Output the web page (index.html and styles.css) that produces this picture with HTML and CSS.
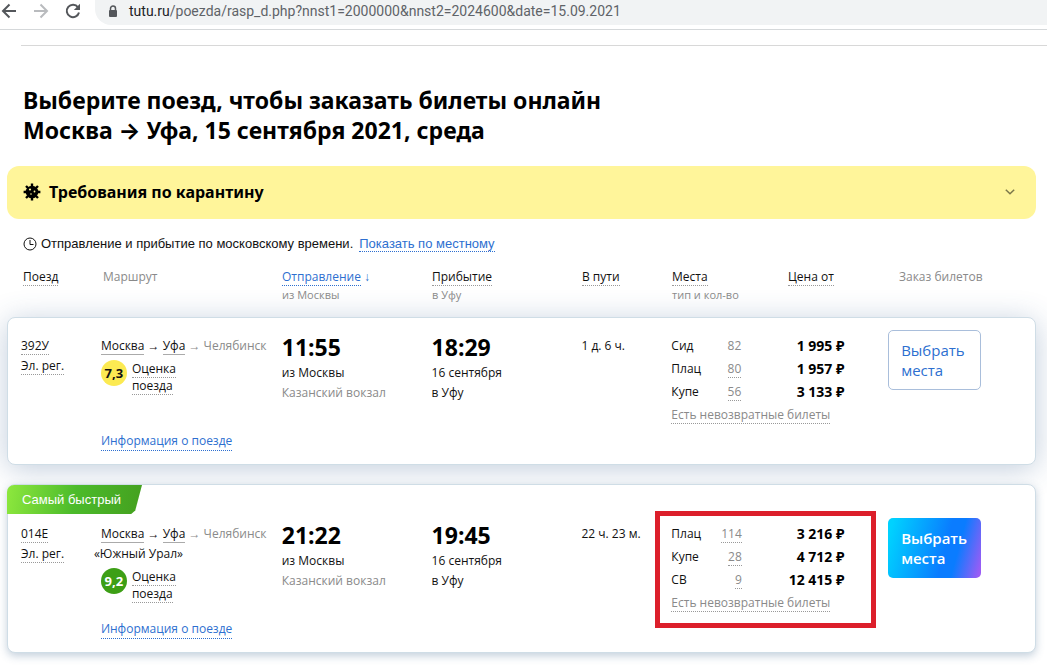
FILE: index.html
```html
<!DOCTYPE html>
<html lang="ru">
<head>
<meta charset="utf-8">
<title>Москва → Уфа</title>
<link rel="stylesheet" href="styles.css">
</head>
<body>
<header class="browser">
  <button class="nav" aria-label="Назад"><svg width="16" height="16" viewBox="0 0 16 16" fill="none" stroke="#54575b" stroke-width="2"><path d="M15 8H2M8.500 1.500 2 8l6.500 6.500"/></svg></button>
  <button class="nav" aria-label="Вперёд"><svg width="16" height="16" viewBox="0 0 16 16" fill="none" stroke="#b9bbbe" stroke-width="2"><path d="M1 8h13M7.500 1.500 14 8l-6.500 6.500"/></svg></button>
  <button class="nav" aria-label="Обновить"><svg width="16" height="16" viewBox="0 0 16 16" fill="none" stroke="#54575b" stroke-width="2"><path d="M13 4.300A6.200 6.200 0 1 0 14 9.500"/><path d="M15 .8v6.200H8.800z" fill="#54575b" stroke="none"/></svg></button>
  <div class="address">
    <svg width="10" height="13" viewBox="0 0 10 13"><path d="M2.500 5.500V3.500a2.500 2.500 0 0 1 5 0v2" fill="none" stroke="#54575b" stroke-width="1.500"/><rect x="1" y="5" width="8" height="7" rx="1" fill="#54575b"/></svg>
    <span><span class="host">tutu.ru</span>/poezda/rasp_d.php?nnst1=2000000&amp;nnst2=2024600&amp;date=15.09.2021</span>
  </div>
</header>
<main class="page">
  <h1 class="title">Выберите поезд, чтобы заказать билеты онлайн<br>Москва <span class="arrow">→</span> Уфа, 15 сентября 2021, среда</h1>
  <button class="notice">
    <svg width="18" height="18" viewBox="0 0 18 18"><circle cx="9" cy="9" r="6.300"/><g stroke="#000" stroke-width="2.400"><path d="M9 .6v3M9 14.400v3M.6 9h3M14.400 9h3M3 3l2 2M13 13l2 2M15 3l-2 2M5 13l-2 2"/></g><circle cx="7" cy="6.500" r="1.100" fill="#fff59a"/><circle cx="11.500" cy="8.500" r=".9" fill="#fff59a"/><circle cx="8" cy="11" r=".8" fill="#fff59a"/></svg>
    <span>Требования по карантину</span>
    <svg class="chevron" width="10" height="6" viewBox="0 0 10 6" fill="none" stroke="#7c784a" stroke-width="1.500"><path d="m.8.8 4.200 4 4.200-4"/></svg>
  </button>
  <p class="zone">
    <svg width="14" height="14" viewBox="0 0 14 14" fill="none" stroke="#111"><circle cx="7" cy="7" r="6"/><path d="M7 3v4.500h3.500"/></svg>
    <span>Отправление и прибытие по московскому времени.</span>
    <a class="dotted" href="#">Показать по местному</a>
  </p>
  <table class="trains">
    <thead>
      <tr class="grid head">
        <th><span class="dotted">Поезд</span></th>
        <th class="muted">Маршрут</th>
        <th><a class="dotted" href="#">Отправление</a> <a href="#">↓</a><small>из Москвы</small></th>
        <th><span class="dotted">Прибытие</span><small>в Уфу</small></th>
        <th><span class="dotted">В пути</span></th>
        <th><span class="dotted">Места</span><small>тип и кол-во</small></th>
        <th><span class="dotted">Цена от</span></th>
        <th class="muted order">Заказ билетов</th>
      </tr>
    </thead>
    <tbody class="card active">
      <tr class="grid row">
        <td><span class="dotted">392У</span><br><span class="dotted">Эл. рег.</span></td>
        <td class="route">
          <div><span class="solid">Москва</span> → <span class="solid">Уфа</span> <span class="muted">→ Челябинск</span></div>
          <div class="rating"><b class="score">7,3</b><span><span class="dotted">Оценка</span><br><span class="dotted">поезда</span></span></div>
          <a class="dotted info" href="#">Информация о поезде</a>
        </td>
        <td><b class="time">11:55</b>из Москвы<br><span class="muted">Казанский вокзал</span></td>
        <td><b class="time">18:29</b>16 сентября<br>в Уфу</td>
        <td>1 д. 6 ч.</td>
        <td class="places">
          <table class="fares">
            <tr><td>Сид</td><td>82</td><td>1 995 ₽</td></tr>
            <tr><td>Плац</td><td><span class="dotted">80</span></td><td>1 957 ₽</td></tr>
            <tr><td>Купе</td><td><span class="dotted">56</span></td><td>3 133 ₽</td></tr>
          </table>
          <span class="dotted muted">Есть невозвратные билеты</span>
        </td>
        <td class="action"><button class="choose">Выбрать места</button></td>
      </tr>
    </tbody>
    <tbody class="card">
      <tr class="ribbon-row"><td><span class="ribbon">Самый быстрый</span></td></tr>
      <tr class="grid row">
        <td><span class="dotted">014Е</span><br><span class="dotted">Эл. рег.</span></td>
        <td class="route">
          <div><span class="solid">Москва</span> → <span class="solid">Уфа</span> <span class="muted">→ Челябинск</span></div>
          <div class="name">«Южный Урал»</div>
          <div class="rating"><b class="score high">9,2</b><span><span class="dotted">Оценка</span><br><span class="dotted">поезда</span></span></div>
          <a class="dotted info" href="#">Информация о поезде</a>
        </td>
        <td><b class="time">21:22</b>из Москвы<br><span class="muted">Казанский вокзал</span></td>
        <td><b class="time">19:45</b>16 сентября<br>в Уфу</td>
        <td>22 ч. 23 м.</td>
        <td class="places marked">
          <table class="fares">
            <tr><td>Плац</td><td><span class="dotted">114</span></td><td>3 216 ₽</td></tr>
            <tr><td>Купе</td><td><span class="dotted">28</span></td><td>4 712 ₽</td></tr>
            <tr><td>СВ</td><td><span class="dotted">9</span></td><td>12 415 ₽</td></tr>
          </table>
          <span class="dotted muted">Есть невозвратные билеты</span>
        </td>
        <td class="action"><button class="choose bright">Выбрать места</button></td>
      </tr>
    </tbody>
  </table>
</main>
</body>
</html>
```
FILE: styles.css
```css
*, *::after { box-sizing: border-box; }
body {
  margin: 0;
  background: #fff;
  color: #111;
  font: 12px/20px "Open Sans", "Noto Sans", sans-serif;
  overflow-x: hidden;
}
button { margin: 0; padding: 0; border: 0; background: none; font: inherit; color: inherit; text-align: left; cursor: pointer; }
a { color: #2d6fd0; text-decoration: none; }
.browser {
  display: flex;
  gap: 16px;
  height: 30px;
  padding-left: 1px;
  border-bottom: 1px solid #d5d8da;
}
.nav { display: flex; padding-top: 3px; height: 20px; }
.address {
  flex: 1;
  display: flex;
  align-items: center;
  gap: 11px;
  height: 25px;
  padding: 0 0 3px 13px;
  margin-left: -2px;
  border-radius: 0 0 0 16px;
  background: #f1f3f4;
  color: #5f6368;
  font-family: Roboto, sans-serif;
  font-size: 14px;
}
.host { color: #202124; }
.page { padding: 15px 11px 24px 7px; }
.title {
  margin: 0 -11px 0 14px;
  padding: 39px 2px 21px;
  border-top: 1px solid #d8d8d8;
  color: #000;
  font-family: "Noto Sans", sans-serif;
  font-size: 23px;
  line-height: 30px;
}
.arrow { font-family: Inter, sans-serif; line-height: 1; }
.notice {
  display: flex;
  align-items: center;
  gap: 8px;
  width: 100%;
  height: 53px;
  padding: 0 21px 2px 16px;
  border-radius: 12px;
  background: #fff59a;
  color: #000;
  font-family: "Noto Sans", sans-serif;
  font-size: 16px;
  font-weight: 700;
}
.chevron { margin-left: auto; }
.zone {
  display: flex;
  align-items: center;
  gap: 4px;
  margin: 16px 0 15px 16px;
  font-family: "Liberation Sans", Arial, sans-serif;
  font-size: 13px;
  line-height: 18px;
}
.zone a { margin-left: 2px; line-height: 15px; }
.dotted { border-bottom: 1px dotted #999; }
a.dotted { border-color: #2d6fd0; }
.solid { border-bottom: 1px solid #aaa; }
.muted { color: #8a8a8a; }
.trains, .trains > thead, .trains > tbody { display: block; }
.grid {
  display: grid;
  grid-template-columns: 80fr 181fr 150fr 150fr 90fr 116fr 101fr 147fr;
  padding-left: 13px;
}
.grid > td, .grid > th { min-width: 0; padding: 0; font-weight: 400; text-align: left; white-space: nowrap; }
.head { padding-left: 14px; margin-bottom: 13px; line-height: 18px; }
.head > :nth-child(-n+2) { padding-left: 2px; }
.head > .order { padding-left: 10px; }
.head small { display: block; color: #8a8a8a; font-size: 11px; }
.card {
  margin-bottom: 19px;
  border: 1px solid #cfdde6;
  border-radius: 8px;
  background: #fff;
  box-shadow: 0 3px 8px rgba(60, 100, 140, .3);
}
.card.active { box-shadow: 0 4px 30px rgba(50, 90, 140, .3); padding-top: 8px; }
.card:last-child { position: relative; }
.row { padding-top: 4px; padding-bottom: 13px; }
.row > td { padding-top: 6px; }
.row > .route { display: flex; flex-direction: column; align-items: flex-start; height: 121px; }
.rating { display: flex; align-items: flex-start; gap: 5px; margin-top: 4px; line-height: 17px; }
.name { text-indent: -7px; }
.score {
  display: grid;
  place-items: center;
  width: 26px;
  height: 26px;
  border-radius: 50%;
  background: #fcea52;
  font-size: 13px;
}
.score.high { background: #3d9f16; color: #fff; }
.info { margin-top: auto; line-height: 18px; }
.time { display: block; color: #000; font-size: 23px; line-height: 22px; margin-bottom: 5px; }
.row > .places { grid-column: span 2; }
.fares { width: 173px; border-collapse: collapse; }
.fares td { width: 50px; height: 23px; padding: 0; line-height: 20px; vertical-align: top; }
.fares td:nth-child(2) { width: 20px; color: #8a8a8a; text-align: right; }
.fares td:nth-child(3) { width: 103px; color: #000; font-size: 14px; font-weight: 700; text-align: right; }
.marked { position: relative; }
.marked::after {
  content: "";
  position: absolute;
  top: -7px;
  left: -16px;
  right: 12px;
  height: 117px;
  border: 5px solid #dc1f2b;
}
.row > .action { padding-top: 0; }
.choose {
  width: 93px;
  height: 60px;
  padding: 0 12px;
  border: 1px solid #a9bedb;
  border-radius: 5px;
  color: #2d6fd0;
  font-size: 15px;
  font-weight: 500;
  line-height: 20px;
  white-space: normal;
}
.choose.bright {
  border: 0;
  padding: 0 13px;
  background: linear-gradient(105deg, #00d2ff 5%, #0a7cff 60%, #0a7cff 72%, #9a5cf5 97%);
  color: #fff;
  font-weight: 600;
}
.ribbon-row { display: block; height: 29px; }
.ribbon-row td { display: block; padding: 0; }
.ribbon {
  display: block;
  width: 135px;
  margin-left: -1px;
  padding-left: 15px;
  border-radius: 7px 0 6px 0;
  background: linear-gradient(100deg, #8ee83e, #4cbb2b 50%, #44a01f);
  clip-path: polygon(0 0, 100% 0, 95% 88%, 92% 100%, 0 100%);
  color: #fff;
  font: 500 13px/29px "Liberation Sans", Arial, sans-serif;
}
```
